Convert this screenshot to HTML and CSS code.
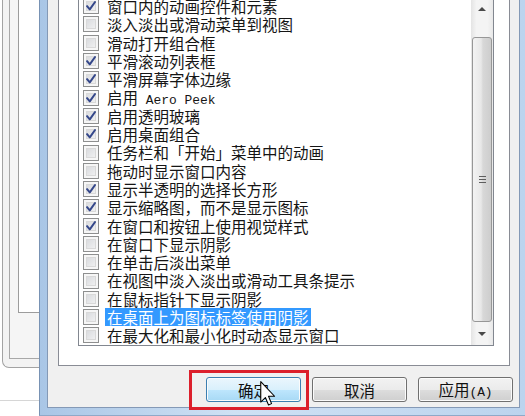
FILE: index.html
```html
<!DOCTYPE html>
<html>
<head>
    <meta charset="utf-8">
    <title>性能选项 - 视觉效果</title>
    <link rel="stylesheet" href="styles.css">
</head>
<body>
    <div class="screen">
        <!-- Window behind the dialog -->
        <div class="backwin">
            <div class="bw-outer">
                <div class="bw-mid">
                    <div class="bw-client"></div>
                </div>
            </div>
            <div class="bw-page"></div>
        </div>

        <!-- Performance options dialog -->
        <div class="dialog">
            <div class="face">
                <div class="tabpage">
                    <div class="listbox">
                        <ul class="rows">
                            <li><span class="cb on"><svg viewBox="0 0 16 16"><path d="M3.5 8.2 L6.6 11.8 L12.6 3.4"/></svg></span><span class="label">窗口内的动画控件和元素</span></li>
                            <li><span class="cb"></span><span class="label">淡入淡出或滑动菜单到视图</span></li>
                            <li><span class="cb"></span><span class="label">滑动打开组合框</span></li>
                            <li><span class="cb on"><svg viewBox="0 0 16 16"><path d="M3.5 8.2 L6.6 11.8 L12.6 3.4"/></svg></span><span class="label">平滑滚动列表框</span></li>
                            <li><span class="cb on"><svg viewBox="0 0 16 16"><path d="M3.5 8.2 L6.6 11.8 L12.6 3.4"/></svg></span><span class="label">平滑屏幕字体边缘</span></li>
                            <li><span class="cb on"><svg viewBox="0 0 16 16"><path d="M3.5 8.2 L6.6 11.8 L12.6 3.4"/></svg></span><span class="label">启用<span class="latin"> Aero Peek</span></span></li>
                            <li><span class="cb on"><svg viewBox="0 0 16 16"><path d="M3.5 8.2 L6.6 11.8 L12.6 3.4"/></svg></span><span class="label">启用透明玻璃</span></li>
                            <li><span class="cb on"><svg viewBox="0 0 16 16"><path d="M3.5 8.2 L6.6 11.8 L12.6 3.4"/></svg></span><span class="label">启用桌面组合</span></li>
                            <li><span class="cb"></span><span class="label">任务栏和「开始」菜单中的动画</span></li>
                            <li><span class="cb"></span><span class="label">拖动时显示窗口内容</span></li>
                            <li><span class="cb on"><svg viewBox="0 0 16 16"><path d="M3.5 8.2 L6.6 11.8 L12.6 3.4"/></svg></span><span class="label">显示半透明的选择长方形</span></li>
                            <li><span class="cb on"><svg viewBox="0 0 16 16"><path d="M3.5 8.2 L6.6 11.8 L12.6 3.4"/></svg></span><span class="label">显示缩略图，而不是显示图标</span></li>
                            <li><span class="cb on"><svg viewBox="0 0 16 16"><path d="M3.5 8.2 L6.6 11.8 L12.6 3.4"/></svg></span><span class="label">在窗口和按钮上使用视觉样式</span></li>
                            <li><span class="cb"></span><span class="label">在窗口下显示阴影</span></li>
                            <li><span class="cb"></span><span class="label">在单击后淡出菜单</span></li>
                            <li><span class="cb"></span><span class="label">在视图中淡入淡出或滑动工具条提示</span></li>
                            <li><span class="cb"></span><span class="label">在鼠标指针下显示阴影</span></li>
                            <li><span class="cb"></span><span class="label selected">在桌面上为图标标签使用阴影</span></li>
                            <li><span class="cb"></span><span class="label">在最大化和最小化时动态显示窗口</span></li>
                        </ul>
                        <div class="vscroll">
                            <div class="sb-btn up"><span class="arrow-up"></span></div>
                            <div class="sb-track"></div>
                            <div class="thumb"><span class="grip"></span></div>
                            <div class="sb-gap"></div>
                            <div class="sb-btn down"><span class="arrow-down"></span></div>
                        </div>
                    </div>
                </div>

                <div class="buttons">
                    <div class="btn-wrap">
                        <button class="btn hot">确定</button>
                        <span class="mark"></span>
                        <svg class="cursor" viewBox="0 0 12 19" width="16" height="25">
                            <path d="M0.5 0.5 L0.5 16 L4 12.6 L6.4 18.2 L8.7 17.2 L6.4 11.6 L11 11.6 Z"/>
                        </svg>
                    </div>
                    <button class="btn">取消</button>
                    <button class="btn">应用<span class="latin">(A)</span></button>
                </div>
            </div>
        </div>
    </div>
</body>
</html>
```

FILE: styles.css
```css
/* Page base */
body {
    margin: 0;
    background: #fff;
    font-family: "Noto Sans CJK SC", sans-serif;
    overflow: hidden;
}

.screen {
    display: flex;
    width: 525px;
    height: 416px;
}

/* Window behind the dialog (left edge) */
.backwin {
    width: 39px;
    display: flex;
    flex-direction: column;
    background: #fff;
}

.bw-outer {
    box-sizing: border-box;
    height: 368px;
    margin-left: 2px;
    padding: 0 0 8px 6px;
    border-left: 1px solid #a3a3a3;
    border-bottom: 1px solid #a3a3a3;
    border-bottom-left-radius: 7px;
    background: #f3f3f3;
}

.bw-mid {
    box-sizing: border-box;
    height: 100%;
    padding-left: 8px;
    border-left: 1px solid #a8a8a8;
    border-bottom: 1px solid #a8a8a8;
    background: #f5f5f5;
}

.bw-client {
    box-sizing: border-box;
    height: 313px;
    border-left: 1px solid #9c9c9c;
    border-bottom: 1px solid #9c9c9c;
    background: #fff;
}

.bw-page {
    height: 32px;
    border-bottom: 1px solid #d6d6d6;
}

/* Dialog frame */
.dialog {
    flex: 1;
    box-sizing: border-box;
    height: 416px;
    padding: 0 5px 0 7px;
    border-left: 1px solid #7892b4;
    border-bottom: 1px solid #8fa9c8;
    background: linear-gradient(to right, #a9c6e6, #cfe1f4 40%, #bcd4ee);
}

.face {
    box-sizing: border-box;
    height: 408px;
    border: 1px solid #8499b6;
    border-top: none;
    background: #f0f0f0;
    display: flex;
    flex-direction: column;
}

/* Visual effects tab page */
.tabpage {
    box-sizing: border-box;
    height: 366px;
    margin: 0 9px 0 10px;
    padding: 0 15px 19px 19px;
    border: 1px solid #898c95;
    border-top: none;
    background: #fff;
}

.listbox {
    box-sizing: border-box;
    height: 346px;
    display: flex;
    border: 1px solid #828790;
    border-top: none;
    overflow: hidden;
}

.rows {
    flex: 1;
    list-style: none;
    margin: -3px 0 0 0;
    padding: 0;
}

.rows li {
    height: 18.3px;
    display: flex;
    align-items: center;
    padding-left: 4px;
    font-size: 15.5px;
    color: #151515;
    white-space: nowrap;
}

/* Checkbox */
.cb {
    box-sizing: border-box;
    width: 16px;
    height: 16px;
    flex: none;
    border: 1px solid #8e8f8f;
    background: linear-gradient(135deg, #d2d4d8, #f7f7f7);
    box-shadow: inset 0 0 0 2px #f6f6f6, inset 0 0 0 3px #d9d9d9;
}

.cb svg {
    display: block;
    width: 14px;
    height: 14px;
}

.cb svg path {
    fill: none;
    stroke: #34478a;
    stroke-width: 2.3;
    stroke-linecap: round;
    stroke-linejoin: round;
}

.label {
    margin-left: 6px;
    padding: 0 2px;
    height: 18.3px;
    line-height: 18.3px;
}

.label.selected {
    background: #3399ff;
    color: #fff;
}

.latin {
    font-family: "Liberation Mono", monospace;
    font-size: 12.9px;
}

/* Vertical scrollbar */
.vscroll {
    width: 22px;
    flex: none;
    display: flex;
    flex-direction: column;
    background: linear-gradient(to right, #e4e4e4, #f4f4f4 25%, #f4f4f4 75%, #e8e8e8);
}

.sb-btn {
    display: flex;
    align-items: center;
    justify-content: center;
}

.sb-btn.up {
    height: 17px;
}

.sb-btn.down {
    height: 22px;
}

.sb-track {
    height: 20px;
}

.sb-gap {
    height: 1px;
}

.arrow-up {
    width: 0;
    height: 0;
    border-left: 4px solid transparent;
    border-right: 4px solid transparent;
    border-bottom: 4px solid #4a4a4a;
}

.arrow-down {
    width: 0;
    height: 0;
    border-left: 4px solid transparent;
    border-right: 4px solid transparent;
    border-top: 4px solid #4a4a4a;
}

.thumb {
    box-sizing: border-box;
    height: 285px;
    margin: 0 1px;
    border: 1px solid #979797;
    border-radius: 3px;
    background: linear-gradient(to right, #f3f3f3, #e8e8e8 45%, #d8d8d8 55%, #cdcdcd);
    display: flex;
    align-items: center;
    justify-content: center;
}

.grip {
    width: 7px;
    height: 7px;
    background: repeating-linear-gradient(#5e5e5e 0, #5e5e5e 1px, transparent 1px, transparent 3px);
}

/* Dialog buttons */
.buttons {
    display: flex;
    justify-content: flex-end;
    gap: 11px;
    padding: 11px 6px 0 0;
}

.btn-wrap {
    position: relative;
}

.btn {
    box-sizing: border-box;
    width: 95px;
    height: 25px;
    padding: 0;
    border: 1px solid #707070;
    border-radius: 3px;
    background: linear-gradient(#f2f2f2 0%, #ebebeb 50%, #dddddd 51%, #cfcfcf 100%);
    box-shadow: inset 0 0 0 1px #fbfbfb;
    font-family: "Noto Sans CJK SC", sans-serif;
    font-size: 15.5px;
    line-height: 22px;
    color: #111;
}

.btn.hot {
    display: block;
    border-color: #3c7fb1;
    background: linear-gradient(#eaf6fd 0%, #d9f0fc 50%, #bee6fd 51%, #a7d9f5 100%);
}

/* Red highlight drawn around the OK button */
.mark {
    position: absolute;
    left: -17px;
    top: -7px;
    width: 120px;
    height: 40px;
    box-sizing: border-box;
    border: 3px solid #dc1f2b;
}

.cursor {
    position: absolute;
    left: 54px;
    top: 4px;
}

.cursor path {
    fill: #fff;
    stroke: #000;
    stroke-width: 0.8;
    stroke-linejoin: round;
}
```
